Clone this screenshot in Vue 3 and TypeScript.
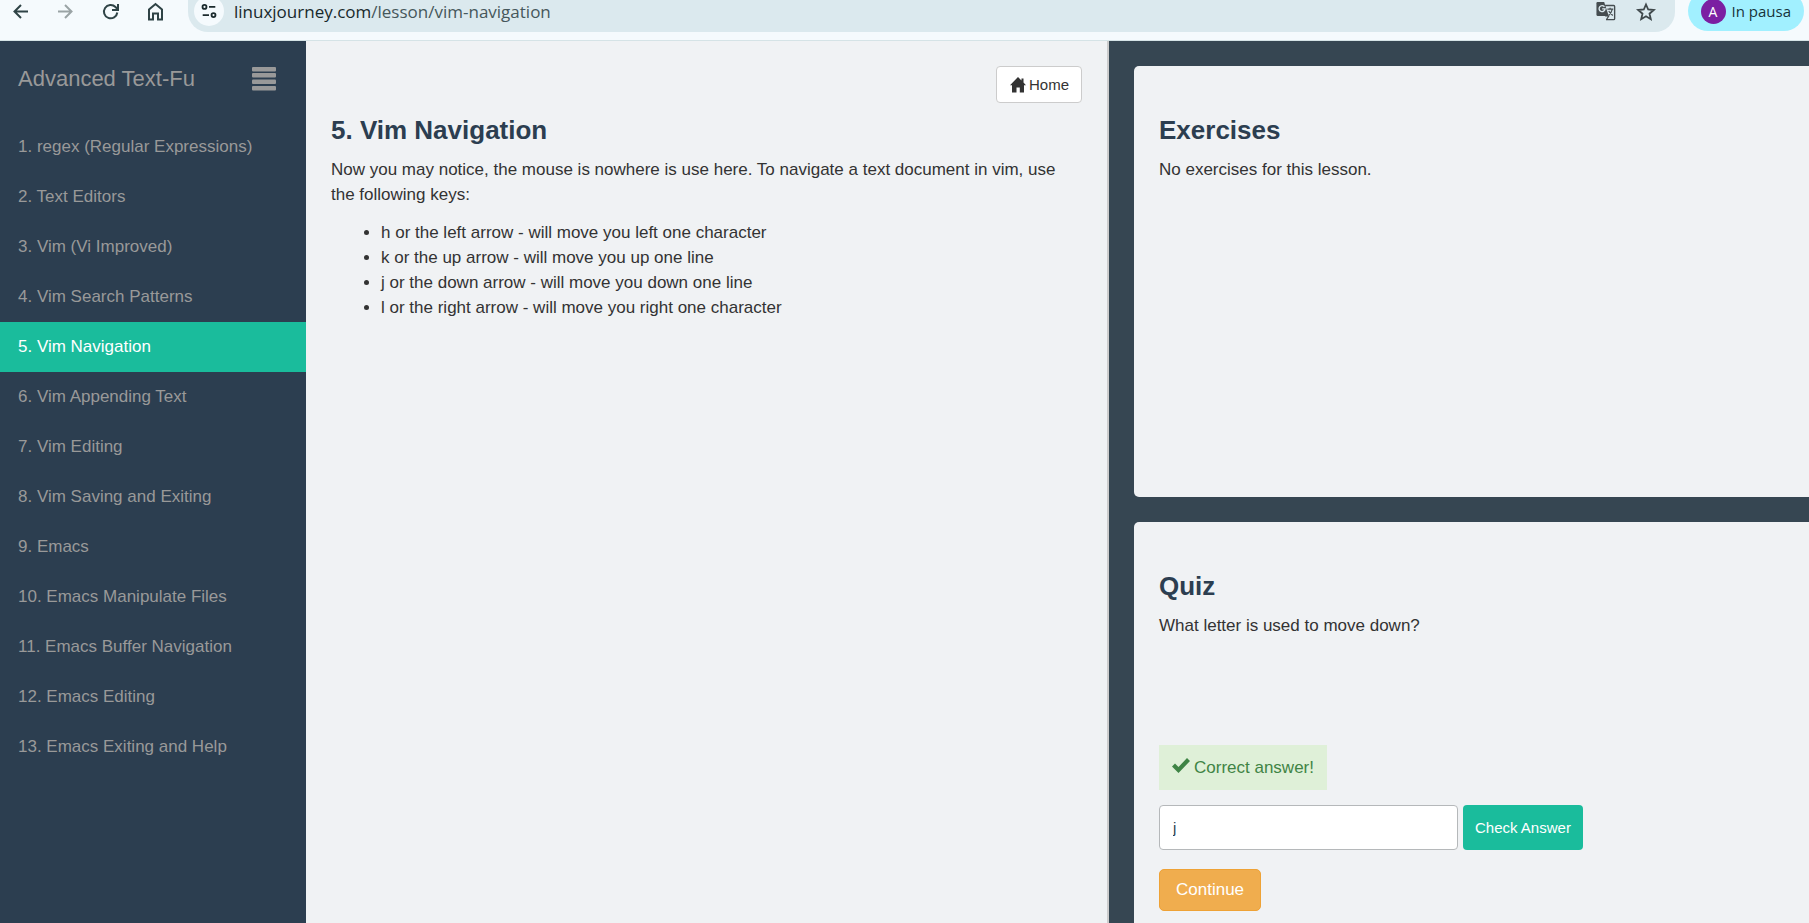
<script setup lang="ts">
import { ref } from 'vue'

const lessons: string[] = [
  'regex (Regular Expressions)',
  'Text Editors',
  'Vim (Vi Improved)',
  'Vim Search Patterns',
  'Vim Navigation',
  'Vim Appending Text',
  'Vim Editing',
  'Vim Saving and Exiting',
  'Emacs',
  'Emacs Manipulate Files',
  'Emacs Buffer Navigation',
  'Emacs Editing',
  'Emacs Exiting and Help',
]
const current = ref(4)
const answer = ref('j')
const keys: string[] = [
  'h or the left arrow - will move you left one character',
  'k or the up arrow - will move you up one line',
  'j or the down arrow - will move you down one line',
  'l or the right arrow - will move you right one character',
]
</script>

<template>
  <div class="window">
    <header class="toolbar">
      <button class="tool" aria-label="Back">
        <svg viewBox="0 0 20 20" fill="none" stroke="#2f4346" stroke-width="2"><path d="M18 10.500H5M11 4 4.500 10.500 11 17" /></svg>
      </button>
      <button class="tool" aria-label="Forward" disabled>
        <svg viewBox="0 0 20 20" fill="none" stroke="#9aa3a5" stroke-width="2"><path d="M3 10.500h13M10 4 16.500 10.500 10 17" /></svg>
      </button>
      <button class="tool" aria-label="Reload">
        <svg viewBox="0 0 20 20" fill="none" stroke="#2f4346" stroke-width="2"><path d="M17.300 11.500A6.700 6.700 0 1 1 15.500 6L17.500 8M18 3v6h-6" /></svg>
      </button>
      <button class="tool" aria-label="Home page">
        <svg viewBox="0 0 20 20" fill="none" stroke="#2f4346" stroke-width="2"><path d="M4 18.500V8.500L10.500 3 17 8.500v10h-4v-6H8v6z" /></svg>
      </button>
      <div class="address">
        <button class="site-info" aria-label="View site information">
          <svg viewBox="0 0 20 20" fill="none" stroke="#1c2b2e" stroke-width="2"><circle cx="5" cy="5.500" r="2.200" /><path d="M10 5.500h7M3 14.500h7" /><circle cx="15" cy="14.500" r="2.200" /></svg>
        </button>
        <a class="url" href="#">linuxjourney.com<span>/lesson/vim-navigation</span></a>
        <button class="tool" aria-label="Translate this page">
          <svg viewBox="0 0 22 22"><path d="M10 5h9.500q1 0 1 1v13.500q0 1-1 1H11" fill="none" stroke="#454d50" stroke-width="1.500" /><path d="M1.500 1H9l5 15.500H2Q.5 16.500 .5 15V2.500Q.5 1 1.500 1Z" fill="#454d50" /><path d="M9.300 6.300A3.300 3.300 0 1 0 10 8.700H6.800" fill="none" stroke="#dbe9ee" stroke-width="1.500" /><path d="M12.500 9H19M15.500 7.500V9M18 9q-1 4-4 6.500M14 11q2 3 4.500 5M11.500 20.500 14 16.500h-4" fill="none" stroke="#454d50" stroke-width="1.300" /></svg>
        </button>
        <button class="tool" aria-label="Bookmark this tab">
          <svg viewBox="0 0 20 20" fill="none" stroke="#3f484b" stroke-width="1.800"><path d="m10 3.500 2.200 5 5.600.5-4.300 3.700 1.300 5.500-4.800-2.900-4.800 2.900 1.300-5.500L2.200 9l5.600-.5z" /></svg>
        </button>
      </div>
      <button class="profile"><span class="avatar">A</span>In pausa</button>
    </header>

    <div class="layout">
      <nav class="sidebar" aria-label="Lessons">
        <div class="course">
          <span>Advanced Text-Fu</span>
          <button class="menu" aria-label="Toggle menu">
            <svg viewBox="0 0 24 24" fill="#999"><rect y="0" width="24" height="4.500" rx="1" /><rect y="6" width="24" height="4.500" rx="1" /><rect y="12.500" width="24" height="4.500" rx="1" /><rect y="19" width="24" height="4.500" rx="1" /></svg>
          </button>
        </div>
        <a
          v-for="(lesson, i) in lessons"
          :key="lesson"
          class="lesson"
          :class="{ active: i === current }"
          href="#"
          @click.prevent="current = i"
        >{{ i + 1 }}. {{ lesson }}</a>
      </nav>

      <main class="content">
        <a class="home" href="#">
          <svg viewBox="0 0 16 16" fill="#333"><path d="M8 0 11.500 3.500V1.500h2V5.500L16 8.300h-2V15.500H9.800V10.500H6.500V15.500H2V8.300H0z" /></svg>
          Home
        </a>
        <h2>5. Vim Navigation</h2>
        <p>Now you may notice, the mouse is nowhere is use here. To navigate a text document in vim, use the following keys:</p>
        <ul>
          <li v-for="key in keys" :key="key">{{ key }}</li>
        </ul>
      </main>

      <aside class="practice">
        <section class="card">
          <h2>Exercises</h2>
          <p>No exercises for this lesson.</p>
        </section>
        <section class="card quiz">
          <h2>Quiz</h2>
          <p><label for="answer">What letter is used to move down?</label></p>
          <div class="result" role="status">
            <svg viewBox="0 0 18 16" fill="#3f8445"><path d="M0 8.500 3 5.500 6.500 9 15 0 18 3 6.500 15z" /></svg>
            Correct answer!
          </div>
          <form class="answer" @submit.prevent>
            <input id="answer" v-model="answer" type="text" />
            <button class="check" type="submit">Check Answer</button>
          </form>
          <button class="continue" type="button">Continue</button>
        </section>
      </aside>
    </div>
  </div>
</template>

<style>
body {
  margin: 0;
}
</style>

<style scoped>
* {
  box-sizing: border-box;
}
.window {
  display: flex;
  flex-direction: column;
  height: 100vh;
  overflow: hidden;
  color: #333;
  background: #f0f2f4;
  font: 17px/25px Arial, "Liberation Sans", sans-serif;
}
button {
  padding: 0;
  border: 0;
  background: none;
  font-family: inherit;
  cursor: pointer;
}
a {
  text-decoration: none;
}
svg {
  display: block;
  overflow: visible;
}
h2 {
  margin: 0 0 12px;
  color: #2c3e50;
  font-size: 26px;
  line-height: 30px;
}
p {
  margin: 0 0 13px;
}

.toolbar {
  display: flex;
  flex: none;
  align-items: flex-start;
  gap: 25px;
  height: 41px;
  padding: 0 5px 0 10px;
  border-bottom: 1px solid #d5e3e6;
  background: #f5fafd;
  font-family: "Segoe UI", "Open Sans", sans-serif;
}
.tool {
  flex: none;
  width: 20px;
  height: 22px;
}
.tool svg {
  width: 20px;
  height: 20px;
}
.address {
  display: flex;
  flex: 1;
  align-items: flex-start;
  gap: 20px;
  height: 32px;
  margin-left: -2px;
  padding: 0 19px 0 6px;
  border-radius: 0 0 20px 20px;
  background: #dbe9ee;
}
.site-info {
  display: flex;
  align-items: center;
  justify-content: center;
  width: 30px;
  height: 30px;
  margin: -4px -10px 0 0;
  border-radius: 50%;
  background: #f5fafd;
}
.site-info svg {
  width: 18px;
  height: 18px;
}
.url {
  flex: 1;
  color: #17282b;
  font-size: 17px;
  line-height: 24px;
}
.url span {
  color: #46575b;
}
.profile {
  display: flex;
  align-items: center;
  gap: 6px;
  height: 40px;
  margin: -9px 0 0 -12px;
  padding: 0 13px;
  border-radius: 20px;
  color: #17333a;
  background: #a1f0ff;
  font-size: 15px;
}
.avatar {
  width: 25px;
  height: 25px;
  border-radius: 50%;
  color: #fff;
  background: #7b1fa2;
  font-size: 14px;
  line-height: 25px;
  text-align: center;
}

.layout {
  display: grid;
  flex: 1;
  grid-template-columns: 306px minmax(0, 803fr) minmax(0, 700fr);
  min-height: 0;
}
.sidebar {
  background: #2c3e50;
}
.course {
  display: flex;
  align-items: center;
  justify-content: space-between;
  height: 75px;
  margin-bottom: 6px;
  padding: 0 30px 0 18px;
  color: #999;
  font-size: 22px;
}
.menu svg {
  width: 24px;
  height: 24px;
}
.lesson {
  display: block;
  height: 50px;
  padding: 0 18px;
  color: #999;
  line-height: 50px;
}
.lesson.active {
  color: #fff;
  background: #1abc9c;
}

.content {
  padding: 25px;
  border-right: 2px solid #ccc;
}
.home {
  display: flex;
  align-items: center;
  gap: 3px;
  width: max-content;
  height: 37px;
  margin: 0 0 12px auto;
  padding: 0 12px 0 13px;
  border: 1px solid #ccc;
  border-radius: 4px;
  color: #333;
  background: #fff;
  font-size: 15px;
}
.home svg {
  width: 16px;
  height: 16px;
}
ul {
  margin: 0;
  padding-left: 50px;
}

.practice {
  display: flex;
  flex-direction: column;
  gap: 25px;
  padding: 25px 0 0 25px;
  background: #364652;
}
.card {
  flex: 1;
  min-height: 0;
  padding: 49px 25px 0;
  border-radius: 5px 0 0 5px;
  background: #f0f2f4;
}
.card.quiz {
  flex: none;
  border-radius: 5px 0 0;
  padding-bottom: 12px;
}
.result {
  display: flex;
  align-items: center;
  gap: 4px;
  width: max-content;
  height: 45px;
  margin-top: 107px;
  padding: 0 13px;
  color: #3f8445;
  background: #dff0d8;
}
.result svg {
  width: 18px;
  height: 16px;
  margin-bottom: 4px;
}
.answer {
  display: flex;
  gap: 5px;
  margin: 15px 0 19px;
}
.answer input {
  width: 299px;
  height: 45px;
  padding: 0 13px;
  border: 1px solid #b5b8ba;
  border-radius: 4px;
  outline: 0;
  color: #2c3e50;
  background: #fff;
  font: 15px Arial, "Liberation Sans", sans-serif;
}
.check {
  height: 45px;
  padding: 0 12px;
  border-radius: 4px;
  color: #fff;
  background: #1abc9c;
  font-size: 15px;
}
.continue {
  height: 42px;
  padding: 0 16px;
  border: 1px solid #eea236;
  border-radius: 5px;
  color: #fff;
  background: #f0ad4e;
  font-size: 17px;
}
</style>
